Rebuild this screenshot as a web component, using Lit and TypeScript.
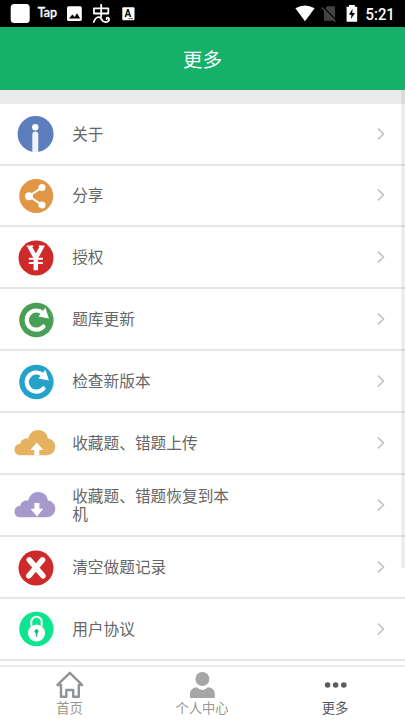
import { LitElement, html, svg, css } from 'lit';
import { customElement } from 'lit/decorators.js';

const reload = (color: string) => svg`
  <circle cx="36.4" cy="31" r="17.2" fill="${color}"/>
  <path d="M43.4 37.6A9.6 9.6 0 1 1 42.6 23.8" fill="none" stroke="#fff" stroke-width="4.2" stroke-linecap="round"/>
  <path d="M45.4 18.8L48.9 29.4L38.4 27.6Z" fill="#fff"/>`;

const cloudPath = 'M20.5 42.3C16.8 42.3 14.4 39.7 14.5 36.5C14.6 33.1 17 30.9 20.4 30.8C20.6 27.2 24 24.6 28.2 25.6C29.6 20.2 33.2 17 38.2 17C43.8 17 47.6 20.8 47.8 25.4C52.2 25.8 55.3 29.3 55.3 33.6C55.3 38.6 51.6 42.3 46.8 42.3Z';

const icons = {
  info: svg`
    <circle cx="35.6" cy="31" r="18" fill="#5d7ebc"/>
    <circle cx="35.3" cy="24.3" r="3.2" fill="#fff"/>
    <path d="M32.3 31.5a3 3 0 0 1 6 0V48.8q-3 .5-6 0Z" fill="#eef2fa"/>`,
  share: svg`
    <circle cx="36.2" cy="31" r="17" fill="#e19645"/>
    <path d="M42 22.4L29 31.2L42 40" fill="none" stroke="#fff" stroke-width="2"/>
    <circle cx="29" cy="31.2" r="4" fill="#fff"/>
    <circle cx="42" cy="22.4" r="3.5" fill="#fff"/>
    <circle cx="42" cy="40" r="3.5" fill="#fff"/>`,
  yen: svg`
    <circle cx="36" cy="31" r="17.5" fill="#cf2a2a"/>
    <path d="M29.5 19.5L35.8 31L42.1 19.5M35.8 30V43.2" fill="none" stroke="#fff" stroke-width="4.4"/>
    <path d="M26.7 19.2h6.5M38.8 19.2h5.8" stroke="#fff" stroke-width="1.6"/>
    <path d="M28.8 31.8h14M28.8 35.9h14" stroke="#fff" stroke-width="2"/>`,
  update: reload('#4a9f56'),
  version: reload('#25a2ca'),
  upload: svg`
    <path d="${cloudPath}" fill="#e6b25f"/>
    <path d="M36.8 29.5L43.2 36.9H39.3V42.4H34.3V36.9H30.4Z" fill="#fff"/>`,
  download: svg`
    <path d="${cloudPath}" fill="#a59acb"/>
    <path d="M34.4 28H39.4V33.8H43.3L36.9 41.5L30.5 33.8H34.4Z" fill="#fff"/>`,
  clear: svg`
    <circle cx="36" cy="31" r="17.5" fill="#cf2a2a"/>
    <path d="M29.3 22.9L42.9 38.8M42.5 22.9L28.9 38.8" stroke="#fff" stroke-width="5.6" stroke-linecap="round"/>`,
  lock: svg`
    <circle cx="36.4" cy="31" r="17.2" fill="#0be68e"/>
    <path d="M31.3 28V24a5.2 5.2 0 0 1 10.4 0V28" fill="none" stroke="#fff" stroke-width="2"/>
    <circle cx="36.5" cy="35" r="8.6" fill="#fff"/>
    <circle cx="36.5" cy="33.2" r="2" fill="#15bd79"/>
    <path d="M36.5 33.5v5" stroke="#15bd79" stroke-width="1.6"/>`,
};

const rows: { icon: keyof typeof icons; label: string }[] = [
  { icon: 'info', label: '关于' },
  { icon: 'share', label: '分享' },
  { icon: 'yen', label: '授权' },
  { icon: 'update', label: '题库更新' },
  { icon: 'version', label: '检查新版本' },
  { icon: 'upload', label: '收藏题、错题上传' },
  { icon: 'download', label: '收藏题、错题恢复到本机' },
  { icon: 'clear', label: '清空做题记录' },
  { icon: 'lock', label: '用户协议' },
];

@customElement('app-root')
export class AppRoot extends LitElement {
  static styles = css`
    :host {
      display: flex;
      flex-direction: column;
      position: relative;
      height: 720px;
      overflow: hidden;
      background: #fff;
      font-family: 'Noto Sans CJK SC', sans-serif;
    }
    svg { display: block; flex: none; }
    .status {
      display: flex;
      justify-content: space-between;
      height: 27px;
      flex: none;
      background: #000;
    }
    .header {
      flex: none;
      height: 63px;
      display: flex;
      align-items: center;
      justify-content: center;
      background: #16b168;
      color: #fff;
      font-size: 19.7px;
    }
    .list {
      box-sizing: border-box;
      flex: none;
      height: 576px;
      padding-top: 13.6px;
      background: linear-gradient(#ebebeb 13.6px, #fff 13.6px);
    }
    .row {
      box-sizing: border-box;
      height: 61.93px;
      display: flex;
      align-items: center;
      border-bottom: 2px solid #e7e7e7;
      background: #fff;
    }
    .label {
      width: 165px;
      margin-left: 12.2px;
      padding-top: 0.6px;
      font-size: 15.7px;
      line-height: 18.6px;
      color: #666;
    }
    .arrow { margin-left: auto; margin-right: 18px; }
    .scroll {
      position: absolute;
      right: 0;
      top: 90px;
      width: 4px;
      height: 478px;
      background: rgba(0, 0, 0, 0.07);
    }
    .nav {
      flex: 1;
      display: grid;
      grid-template-columns: 139px 126px 140px;
      border-top: 2px solid #ececec;
      margin-top: -1px;
    }
    .tab {
      display: flex;
      flex-direction: column;
      align-items: center;
      color: #9a978c;
      font-size: 13.3px;
      line-height: 18px;
    }
    .active { color: #555; }
  `;

  render() {
    return html`
      <div class="status">
        <svg width="150" height="27" viewBox="0 0 150 27">
          <rect x="10.7" y="4" width="19" height="19" rx="3.5" fill="#fff"/>
          <text x="37.8" y="17" textLength="19.2" lengthAdjust="spacingAndGlyphs" fill="#fff" stroke="#fff" stroke-width=".35" font-family="Lato" font-weight="500" font-size="12.5">Tap</text>
          <rect x="67" y="6.3" width="14.8" height="14.8" rx="1.6" fill="#fff"/>
          <path d="M69 18.6L72.4 14.5L74.6 17L77 13.3L80.2 18.6Z" fill="#000"/>
          <g fill="none" stroke="#fff" stroke-width="1.8" stroke-linecap="round" stroke-linejoin="round">
            <path d="M94 8.3H108.3V13.5H94ZM101.2 4.7V16.8"/>
            <path d="M93.7 22C95 18.5 97.5 16.7 99.3 17.2C102 18 101.5 22.3 105.3 22.2C108 22.1 109.5 20.4 109 18.7C108.4 17.1 106.2 17.6 106.7 19.1"/>
          </g>
          <rect x="122.3" y="7.2" width="12.2" height="13" rx="1" fill="#fff"/>
          <text x="124.6" y="16.7" fill="#000" font-family="Roboto" font-weight="700" font-size="10">A</text>
          <path d="M128.5 18.7h4.6" stroke="#333" stroke-width=".8"/>
        </svg>
        <svg width="115" height="27" viewBox="290 0 115 27">
          <path d="M295.4 8.2Q304.9 2.7 314.6 8.2L305 21.3Z" fill="#fff"/>
          <path d="M327.2 6.3H335V20.8H324V9.5Z" fill="#424242"/>
          <path d="M322.8 6.8L336.8 21" stroke="#000" stroke-width="1.4"/>
          <path d="M321.8 7.5L335.6 21.7" stroke="#4d4d4d" stroke-width="1.2"/>
          <path d="M346.6 6.7H349V5H354.8V6.7H357.2V21.7H346.6Z" fill="#fff"/>
          <path d="M352.6 8.8L348.9 14.7H351.4L350.9 19L355 13H352.3Z" fill="#000"/>
          <text x="365.6" y="20" textLength="29.2" lengthAdjust="spacingAndGlyphs" fill="#fff" font-family="Roboto" font-weight="500" font-size="16">5:21</text>
        </svg>
      </div>
      <div class="header">更多</div>
      <div class="list">
        ${rows.map(r => html`
          <div class="row">
            <svg width="60" height="59" viewBox="0 1 60 59">${icons[r.icon]}</svg>
            <div class="label">${r.label}</div>
            <svg class="arrow" width="12" height="14" viewBox="0 0 12 14">
              <path d="M3 1.7L8.5 7L3 12.3" fill="none" stroke="#c2c2c6" stroke-width="1.6"/>
            </svg>
          </div>`)}
      </div>
      <div class="nav">
        <div class="tab">
          <svg width="32" height="32" viewBox="54 667 32 32">
            <path d="M57.5 684.8L69.8 672.8L82.1 684.8M58 685H61V696.8H66.3V690H73.2V696.8H78.8V685H81.8" fill="none" stroke="#919497" stroke-width="2.4" stroke-linejoin="round" stroke-linecap="round"/>
          </svg>
          首页
        </div>
        <div class="tab">
          <svg width="32" height="32" viewBox="186 667 32 32">
            <circle cx="202.4" cy="679" r="7" fill="#a6a6a6"/>
            <path d="M190 698V694C190 690 192.8 687.4 197 687.2Q202.4 693 207.8 687.2C212 687.4 214.8 690 214.8 694V698Z" fill="#a6a6a6"/>
          </svg>
          个人中心
        </div>
        <div class="tab active">
          <svg width="32" height="32" viewBox="319 667 32 32">
            <g fill="#5c5c5c"><circle cx="327.6" cy="685" r="2.8"/><circle cx="335.6" cy="685" r="2.8"/><circle cx="343.8" cy="685" r="2.8"/></g>
          </svg>
          更多
        </div>
      </div>
      <div class="scroll"></div>
    `;
  }
}
